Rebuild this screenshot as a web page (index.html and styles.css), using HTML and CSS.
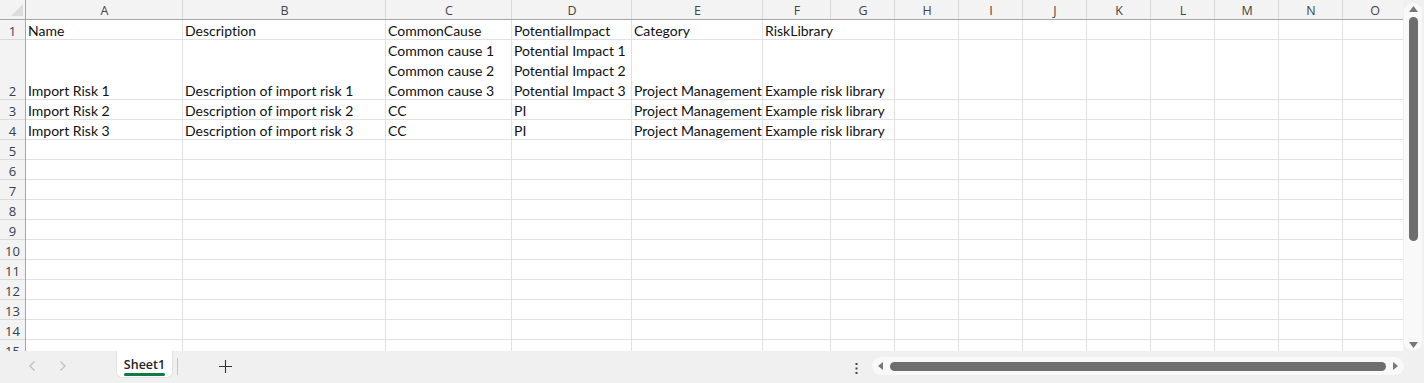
FILE: index.html
```html
<!DOCTYPE html>
<html lang="en">
<head>
    <meta charset="utf-8">
    <title>Sheet1</title>
    <link rel="stylesheet" href="styles.css">
</head>
<body>
    <div class="app">
        <div class="main">
            <div class="sheet">
                <div class="grid">
                    <!-- column headers -->
                    <div class="corner"><svg width="14" height="14" viewBox="0 0 14 14"><polygon points="13,1 13,13 1,13" fill="#dcdcdc"/></svg></div>
                    <div class="ch">A</div><div class="ch">B</div><div class="ch">C</div><div class="ch">D</div><div class="ch">E</div>
                    <div class="ch">F</div><div class="ch">G</div><div class="ch">H</div><div class="ch">I</div><div class="ch">J</div>
                    <div class="ch">K</div><div class="ch">L</div><div class="ch">M</div><div class="ch">N</div><div class="ch">O</div>

                    <!-- row 1 -->
                    <div class="rh">1</div>
                    <div>Name</div><div>Description</div><div>CommonCause</div><div>PotentialImpact</div><div>Category</div>
                    <div class="wide">RiskLibrary</div>
                    <div></div><div></div><div></div><div></div><div></div><div></div><div></div><div></div>

                    <!-- row 2 -->
                    <div class="rh tall">2</div>
                    <div class="tall">Import Risk 1</div>
                    <div class="tall">Description of import risk 1</div>
                    <div>Common cause 1<br>Common cause 2<br>Common cause 3</div>
                    <div>Potential Impact 1<br>Potential Impact 2<br>Potential Impact 3</div>
                    <div class="tall">Project Management</div>
                    <div class="wide tall">Example risk library</div>
                    <div></div><div></div><div></div><div></div><div></div><div></div><div></div><div></div>

                    <!-- row 3 -->
                    <div class="rh">3</div>
                    <div>Import Risk 2</div><div>Description of import risk 2</div><div>CC</div><div>PI</div><div>Project Management</div>
                    <div class="wide">Example risk library</div>
                    <div></div><div></div><div></div><div></div><div></div><div></div><div></div><div></div>

                    <!-- row 4 -->
                    <div class="rh">4</div>
                    <div>Import Risk 3</div><div>Description of import risk 3</div><div>CC</div><div>PI</div><div>Project Management</div>
                    <div class="wide">Example risk library</div>
                    <div></div><div></div><div></div><div></div><div></div><div></div><div></div><div></div>

                    <!-- empty rows -->
                    <div class="rh">5</div><div></div><div></div><div></div><div></div><div></div><div></div><div></div><div></div><div></div><div></div><div></div><div></div><div></div><div></div><div></div>
                    <div class="rh">6</div><div></div><div></div><div></div><div></div><div></div><div></div><div></div><div></div><div></div><div></div><div></div><div></div><div></div><div></div><div></div>
                    <div class="rh">7</div><div></div><div></div><div></div><div></div><div></div><div></div><div></div><div></div><div></div><div></div><div></div><div></div><div></div><div></div><div></div>
                    <div class="rh">8</div><div></div><div></div><div></div><div></div><div></div><div></div><div></div><div></div><div></div><div></div><div></div><div></div><div></div><div></div><div></div>
                    <div class="rh">9</div><div></div><div></div><div></div><div></div><div></div><div></div><div></div><div></div><div></div><div></div><div></div><div></div><div></div><div></div><div></div>
                    <div class="rh">10</div><div></div><div></div><div></div><div></div><div></div><div></div><div></div><div></div><div></div><div></div><div></div><div></div><div></div><div></div><div></div>
                    <div class="rh">11</div><div></div><div></div><div></div><div></div><div></div><div></div><div></div><div></div><div></div><div></div><div></div><div></div><div></div><div></div><div></div>
                    <div class="rh">12</div><div></div><div></div><div></div><div></div><div></div><div></div><div></div><div></div><div></div><div></div><div></div><div></div><div></div><div></div><div></div>
                    <div class="rh">13</div><div></div><div></div><div></div><div></div><div></div><div></div><div></div><div></div><div></div><div></div><div></div><div></div><div></div><div></div><div></div>
                    <div class="rh">14</div><div></div><div></div><div></div><div></div><div></div><div></div><div></div><div></div><div></div><div></div><div></div><div></div><div></div><div></div><div></div>
                    <div class="rh">15</div><div></div><div></div><div></div><div></div><div></div><div></div><div></div><div></div><div></div><div></div><div></div><div></div><div></div><div></div><div></div>
                </div>
            </div>

            <div class="vscroll">
                <div class="vtrack">
                    <svg width="9" height="6" viewBox="0 0 9 6"><polygon points="4.5,0 9,6 0,6" fill="#777"/></svg>
                    <div class="vthumb"></div>
                    <div class="fill"></div>
                    <svg width="9" height="6" viewBox="0 0 9 6"><polygon points="0,0 9,0 4.5,6" fill="#777"/></svg>
                </div>
            </div>
        </div>

        <div class="tabbar">
            <div class="nav">
                <svg width="6" height="10" viewBox="0 0 6 10"><polyline points="5.5,0.5 1,5 5.5,9.5" fill="none" stroke="#bdbdbd" stroke-width="1.2"/></svg>
                <svg width="6" height="10" viewBox="0 0 6 10"><polyline points="0.5,0.5 5,5 0.5,9.5" fill="none" stroke="#bdbdbd" stroke-width="1.2"/></svg>
            </div>
            <div class="tab">
                <span class="tab-label">Sheet1</span>
                <div class="tab-line"></div>
            </div>
            <div class="divider"></div>
            <svg class="add" width="13" height="13" viewBox="0 0 13 13"><path d="M6.5 0V13M0 6.5H13" stroke="#333" stroke-width="1.1"/></svg>
            <div class="fill"></div>
            <svg class="more" width="3" height="11" viewBox="0 0 3 11"><rect x="0.5" y="0" width="2" height="2" fill="#444"/><rect x="0.5" y="4.5" width="2" height="2" fill="#444"/><rect x="0.5" y="9" width="2" height="2" fill="#444"/></svg>
            <div class="htrack">
                <svg width="5" height="8" viewBox="0 0 5 8"><polygon points="5,0 5,8 0,4" fill="#777"/></svg>
                <div class="hthumb"></div>
                <svg width="5" height="8" viewBox="0 0 5 8"><polygon points="0,0 5,4 0,8" fill="#777"/></svg>
            </div>
        </div>
    </div>
</body>
</html>
```

FILE: styles.css
```css
body {
    margin: 0;
    background-color: #f0f0f0;
    font-family: Lato, "Liberation Sans", sans-serif;
}

.app {
    width: 1424px;
    height: 383px;
    display: flex;
    flex-direction: column;
    overflow: hidden;
}

.main {
    display: flex;
    height: 351px;
}

.sheet {
    width: 1403px;
    overflow: hidden;
    background-color: #fff;
}

.grid {
    display: grid;
    grid-template-columns: 26px 157px 203px 126px 120px 131px 68px repeat(9, 64px);
    grid-template-rows: 20px 20px 60px repeat(13, 20px);
    width: 1407px;
}

/* plain cell: text sits on the top line, grid line drawn as inset shadow */
.grid > div {
    box-shadow: inset -1px -1px 0 #e1e1e1;
    overflow: hidden;
    white-space: nowrap;
    padding: 1px 2px 0;
    font-size: 14px;
    line-height: 20px;
    font-variant-ligatures: none;
    color: #111;
}

/* single line in the 60px row: bottom aligned like Excel */
.grid > .tall {
    padding-top: 41px;
}

.grid > .wide {
    grid-column: span 2;
}

.grid > .corner {
    background-color: #f3f3f3;
    box-shadow: inset 0 -1px 0 #a6a6a6, inset -1px 0 0 #a6a6a6;
    padding: 3px 0 0 10px;
    line-height: 0;
}

.grid > .ch {
    background-color: #f3f3f3;
    box-shadow: inset 0 -1px 0 #a6a6a6, inset -1px 0 0 #d9d9d9;
    font-family: "Open Sans", sans-serif;
    font-size: 12.5px;
    line-height: 19px;
    padding: 1px 0 0;
    color: #444;
    text-align: center;
}

.grid > .rh {
    background-color: #f3f3f3;
    box-shadow: inset -1px 0 0 #a6a6a6, inset 0 -1px 0 #dadada;
    font-family: "Open Sans", sans-serif;
    font-size: 13px;
    padding: 1px 1px 0 0;
    color: #34404e;
    text-align: center;
}

.grid > .rh.tall {
    padding-top: 41px;
}

/* scrollbars */
.vscroll {
    width: 21px;
}

.vtrack {
    margin: 3px 2px 0 1px;
    height: 348px;
    padding: 3px 0;
    box-sizing: border-box;
    background-color: #f9f9f9;
    border-radius: 9px;
    display: flex;
    flex-direction: column;
    align-items: center;
}

.vthumb {
    width: 9px;
    height: 224px;
    margin-top: 5px;
    background-color: #6e6e6e;
    border-radius: 5px;
}

.fill {
    flex: 1;
}

.tabbar {
    height: 32px;
    display: flex;
    align-items: flex-start;
}

.nav {
    width: 116px;
    height: 30px;
    box-sizing: border-box;
    padding-left: 29px;
    display: flex;
    align-items: center;
    gap: 25px;
}

.tab {
    width: 57px;
    height: 27px;
    box-sizing: border-box;
    background-color: #fff;
    border: 1px solid #e2e2e2;
    border-top: none;
    border-radius: 0 0 6px 6px;
    padding-top: 6px;
    display: flex;
    flex-direction: column;
    align-items: center;
}

.tab-label {
    font-family: "Open Sans", sans-serif;
    font-weight: 600;
    font-size: 12.5px;
    line-height: 16px;
    color: #242424;
}

.tab-line {
    width: 41px;
    height: 3px;
    background-color: #107c41;
    border-radius: 2px;
}

.divider {
    width: 1px;
    height: 17px;
    margin: 7px 0 0 4px;
    background-color: #c6c6c6;
}

.add {
    margin: 9px 0 0 41px;
}

.more {
    margin: 12px 14px 0 0;
}

.htrack {
    width: 532px;
    height: 18px;
    margin: 6px 20px 0 0;
    box-sizing: border-box;
    padding: 0 6px;
    background-color: #f9f9f9;
    border-radius: 9px;
    display: flex;
    align-items: center;
    gap: 7px;
}

.hthumb {
    flex: 1;
    height: 9px;
    background-color: #6e6e6e;
    border-radius: 5px;
}
```
